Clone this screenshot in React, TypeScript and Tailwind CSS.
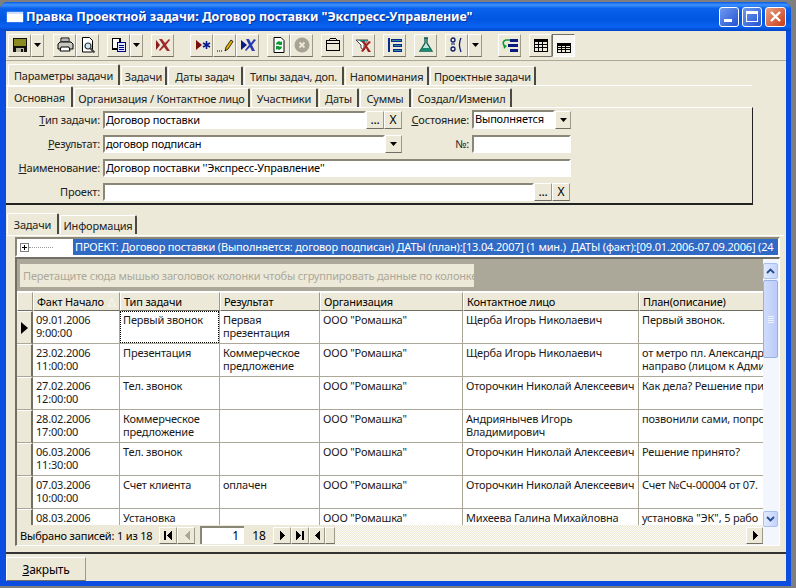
import React from "react";

const raised = "border border-t-white border-l-white border-r-[#9d9a8a] border-b-[#716f64]";
const sunken = "border-2 border-t-[#8a8778] border-l-[#8a8778] border-r-white border-b-white bg-white";

function Btn({ w = 23, children, cls = "" }: { w?: number; children?: React.ReactNode; cls?: string }) {
  return (
    <div style={{ width: w }} className={`h-[23px] shrink-0 flex items-center justify-center bg-[#ece9d8] ${raised} ${cls}`}>
      {children}
    </div>
  );
}
const Caret = () => <svg width="7" height="4" viewBox="0 0 7 4"><path d="M0 0h7L3.5 4z" fill="#000" /></svg>;
const I = ({ children }: { children: React.ReactNode }) => (
  <svg width="18" height="18" viewBox="0 0 18 18" shapeRendering="crispEdges">{children}</svg>
);
const I2 = ({ children }: { children: React.ReactNode }) => (
  <svg width="18" height="18" viewBox="0 0 18 18">{children}</svg>
);

const RedX = ({ c = "#8a1a1a" }: { c?: string }) => (
  <path d="M5 3l3 0 3 4 4-4 1 1-4 5 4 6-3 0-3-4-4 4-1-1 4-5z" fill={c} />
);

function Tab({ w, active, children }: { w: number; active?: boolean; children: React.ReactNode }) {
  return (
    <div
      style={{ width: w }}
      className={`shrink-0 flex items-center justify-center rounded-t-[2px] border-t border-l border-t-white border-l-white border-r-2 border-r-[#4a4942] whitespace-nowrap ${active ? "h-[21px] relative z-10 bg-[#ece9d8] -mt-[2px]" : "h-[19px]"}`}
    >
      {children}
    </div>
  );
}

function Field({ w, h = 18, children, cls = "" }: { w: number; h?: number; children?: React.ReactNode; cls?: string }) {
  return (
    <div style={{ width: w, height: h }} className={`shrink-0 overflow-hidden whitespace-nowrap leading-[14px] pl-px ${sunken} ${cls}`}>
      {children}
    </div>
  );
}
function Mini({ children, w = 18 }: { children: React.ReactNode; w?: number }) {
  return (
    <div style={{ width: w }} className={`h-[18px] shrink-0 flex items-center justify-center text-[12px] leading-none bg-[#ece9d8] ${raised}`}>
      {children}
    </div>
  );
}
const Label = ({ w, children }: { w: number; children: React.ReactNode }) => (
  <div style={{ width: w }} className="shrink-0 text-right pr-[3px] text-[#222] whitespace-nowrap">{children}</div>
);

const cols = [87, 100, 100, 143, 176, 125];
const head = ["Факт Начало", "Тип задачи", "Результат", "Организация", "Контактное лицо", "План(описание)"];
const org = 'ООО "Ромашка"';
const rows: string[][] = [
  ["09.01.2006\n9:00:00", "Первый звонок", "Первая\nпрезентация", org, "Щерба Игорь Николаевич", "Первый звонок."],
  ["23.02.2006\n11:00:00", "Презентация", "Коммерческое\nпредложение", org, "Щерба Игорь Николаевич", "от метро пл. Александр\nнаправо (лицом к Адми"],
  ["27.02.2006\n12:00:00", "Тел. звонок", "", org, "Оторочкин Николай Алексеевич", "Как дела? Решение при"],
  ["28.02.2006\n17:00:00", "Коммерческое\nпредложение", "", org, "Андриянычев Игорь\nВладимирович", "позвонили сами, попро"],
  ["06.03.2006\n11:30:00", "Тел. звонок", "", org, "Оторочкин Николай Алексеевич", "Решение принято?"],
  ["07.03.2006\n10:00:00", "Счет клиента", "оплачен", org, "Оторочкин Николай Алексеевич", "Счет №Сч-00004 от 07."],
  ["08.03.2006", "Установка", "", org, "Михеева Галина Михайловна", 'установка "ЭК", 5 рабо'],
];

const Nav = ({ w = 18, d, fade }: { w?: number; d: string; fade?: boolean }) => (
  <div style={{ width: w }} className={`h-[17px] shrink-0 flex items-center justify-center bg-[#ece9d8] ${raised}`}>
    <svg width="11" height="9" viewBox="0 0 11 9" shapeRendering="crispEdges"><path d={d} fill={fade ? "#aca899" : "#000"} /></svg>
  </div>
);

export default function App() {
  return (
    <div className="w-[796px] h-[588px] bg-[#7f7f7f] overflow-hidden pt-[2px] text-[11px] leading-[13px] tracking-[-0.18px] text-black font-['Roboto',sans-serif]">
      <div className="w-[791px] h-[584px] flex flex-col rounded-t-[8px] bg-[#0a4de0] overflow-hidden">
        {/* title bar */}
        <div className="h-[29px] shrink-0 flex items-center pl-[7px] pr-[5px] bg-[linear-gradient(180deg,#0a5ae8_0%,#3f93fb_10%,#0a62ee_22%,#0056e0_60%,#0a62f0_85%,#0044c8_100%)]">
          <div className="w-[16px] h-[10px] bg-white border-t-2 border-[#cfe0ff] shadow-[0_0_1px_#fff]" />
          <div className="ml-[3px] text-white font-bold text-[12.5px] tracking-[-0.05px] whitespace-nowrap [text-shadow:1px_1px_0_#0a2f90]">
            Правка Проектной задачи: Договор поставки "Экспресс-Управление"
          </div>
          <div className="ml-auto flex gap-[3px]">
            <div className="w-[20px] h-[20px] rounded-[3px] border border-white bg-[linear-gradient(135deg,#6f9bf0,#2352d0)] flex items-end pl-[4px] pb-[4px]">
              <div className="w-[8px] h-[3px] bg-white" />
            </div>
            <div className="w-[20px] h-[20px] rounded-[3px] border border-white bg-[linear-gradient(135deg,#6f9bf0,#2352d0)] flex items-center justify-center">
              <div className="w-[12px] h-[11px] border border-white border-t-[3px]" />
            </div>
            <div className="w-[21px] h-[20px] rounded-[3px] border border-white bg-[linear-gradient(135deg,#e8a088,#c83c14)] flex items-center justify-center">
              <svg width="13" height="13" viewBox="0 0 13 13"><path d="M2 2l9 9M11 2l-9 9" stroke="#fff" strokeWidth="2.4" /></svg>
            </div>
          </div>
        </div>
        {/* client */}
        <div className="flex-1 min-h-0 ml-[6px] mr-[5px] mb-[5px] bg-[#ece9d8] flex flex-col">
          {/* toolbar */}
          <div className="h-[30px] shrink-0 flex items-center pl-[2px] border-b border-b-[#aca899] pb-px">
            <Btn><I><path d="M2 2h14v14H2z" fill="#111" /><path d="M3 3h12v7H3z" fill="#8a8a20" /><path d="M5 12h8v4H5z" fill="#b8b8a0" /><path d="M10 13h2v3h-2z" fill="#111" /></I></Btn>
            <Btn w={13}><Caret /></Btn>
            <Btn cls="ml-[9px]"><I2><path d="M5 2h8v5H5z" fill="#fff" stroke="#000" /><path d="M2 8l2-2h11l2 2v5H2z" fill="#c8c8c0" stroke="#000" /><path d="M5 11h8l1 4H4z" fill="#fff" stroke="#000" /><path d="M6 4h6M6 5.5h6" stroke="#000" strokeWidth=".6" /></I2></Btn>
            <Btn><I2><path d="M3.5 1.5h7l3 3V16h-10z" fill="#fff" stroke="#000" /><circle cx="9" cy="10" r="3" fill="#cfe6f5" stroke="#333" strokeWidth="1.2" /><path d="M11 12l4.5 4.5" stroke="#444" strokeWidth="2" /></I2></Btn>
            <Btn cls="ml-[8px]"><I><path d="M2 2h8v11H2z" fill="#fff" stroke="#000" /><path d="M2.5 2.5h7v10h-7z" fill="none" stroke="#000" /><path d="M7 6h9v10H7z" fill="#dfe6ff" /><path d="M7 6h9v1H7zM7 15h9v1H7zM7 6h1v10H7zM15 6h1v10h-1z" fill="#000080" /><path d="M9 9h5v1H9zM9 11h5v1H9zM9 13h5v1H9z" fill="#000080" /></I></Btn>
            <Btn w={13}><Caret /></Btn>
            <Btn cls="ml-[8px]"><I2><path d="M2 4l4 5-4 5z" fill="#8a1a1a" /><RedX c="#9c2a2a" /></I2></Btn>
            <Btn cls="ml-[16px]"><I2><path d="M3 4l6 5-6 5z" fill="#7a1010" /><path d="M13.5 5v8M10 7l7 4M17 7l-7 4" stroke="#0a1a90" strokeWidth="1.6" /></I2></Btn>
            <Btn><I2><path d="M1 15h1M3 15h1M5 15h1" stroke="#000" /><path d="M9 15l1-4 5-7 2 1.5-5 7.5z" fill="#e6b800" stroke="#000" strokeWidth=".8" /></I2></Btn>
            <Btn><I2><path d="M2 4l6 5-6 5z" fill="#0a1a80" /><path d="M7 3l3 0 2 4 3-4 2 1-4 5 3 6-3 0-2-4-4 4-1-1 4-5z" fill="#2a3ab0" /></I2></Btn>
            <Btn cls="ml-[8px]"><I2><path d="M4 1.5h7l3 3V16.500H4z" fill="#fff" stroke="#000" /><path d="M6 8a3 3 0 0 1 5-2l1-1v4H8l1-1a2 2 0 0 0-2 1z" fill="#0a9a30" /><path d="M12 11a3 3 0 0 1-5 2l-1 1v-4h4l-1 1a2 2 0 0 0 2-1z" fill="#0a9a30" /></I2></Btn>
            <Btn><I2><circle cx="9" cy="9" r="7.500" fill="#a6a294" /><path d="M6.500 6.500l5 5M11.500 6.500l-5 5" stroke="#ece9d8" strokeWidth="1.800" /></I2></Btn>
            <Btn cls="ml-[8px]"><I><path d="M2 5h14v10H2z" fill="#ece9d8" /><path d="M2 4h14v1H2zM2 14h14v1H2zM2 4h1v11H2zM15 4h1v11h-1zM6 2h6v1H6zM5 3h1v2H5zM12 3h1v2h-1zM2 7h14v1H2z" fill="#000" /></I></Btn>
            <Btn cls="ml-[8px]"><I2><path d="M1 4h12l-4 5v5l-3-2V9z" fill="#fff" stroke="#444" /><path d="M4 4h8l-2 2H6z" fill="#0a8a80" /><path d="M6 5l3 0 2 3 3-3 2 1-4 4 4 6-3 0-2-4-3 4-2-1 4-5z" fill="#a02020" /></I2></Btn>
            <Btn cls="ml-[8px]"><I><path d="M2 2h2v14H2z" fill="#0a2a90" /><path d="M5 3h11v3H5zM7 8h9v3H7zM7 13h9v3H7z" fill="#0a2a90" /><path d="M6 4h9v1H6zM8 9h7v1H8zM8 14h7v1H8z" fill="#2a8a9a" /></I></Btn>
            <Btn cls="ml-[8px]"><I2><path d="M7 2h4M8 2v5l-5 8h12l-5-8V2" fill="#bfe5d8" stroke="#0a5a50" strokeWidth="1.300" /><path d="M5 12h8l2 3H3z" fill="#1a8a70" /></I2></Btn>
            <Btn cls="ml-[8px]"><I2><circle cx="5" cy="4" r="2" fill="none" stroke="#0a1a70" strokeWidth="1.300" /><circle cx="5" cy="13" r="2" fill="none" stroke="#0a1a70" strokeWidth="1.300" /><path d="M3 8h4" stroke="#0a1a70" /><path d="M13 2c-2 4-2 9 0 14" fill="none" stroke="#0a1a70" strokeWidth="1.300" /></I2></Btn>
            <Btn w={14}><Caret /></Btn>
            <Btn cls="ml-[16px]"><I2><path d="M9 4H5a3 3 0 0 0-2 5" fill="none" stroke="#0a9a30" strokeWidth="1.600" /><path d="M2 8l4 2-3 3z" fill="#0a9a30" /><path d="M9 3h8v3H9zM7 8h10v3H7zM9 13h8v3H9z" fill="#0a1a80" /></I2></Btn>
            <Btn cls="ml-[8px]"><I><path d="M2 3h14v13H2z" fill="#000" /><path d="M3 6h3v2H3zM7 6h3v2H7zM11 6h4v2h-4zM3 9h3v2H3zM7 9h3v2H7zM11 9h4v2h-4zM3 12h3v3H3zM7 12h3v3H7zM11 12h4v3h-4z" fill="#ece9d8" /></I></Btn>
            <div className="w-[23px] h-[23px] shrink-0 flex items-center justify-center border border-t-[#716f64] border-l-[#716f64] border-r-white border-b-white bg-[#f7f6f0]">
              <div className="mt-[3px]"><I><path d="M2 5h14v10H2z" fill="#000" /><path d="M3 8h3v1H3zM7 8h3v1H7zM11 8h4v1h-4zM3 10h3v1H3zM7 10h3v1H7zM11 10h4v1h-4zM3 12h3v2H3zM7 12h3v2H7zM11 12h4v2h-4z" fill="#ece9d8" /></I></div>
            </div>
          </div>

          {/* upper tabs */}
          <div className="flex pl-[2px] mt-[5px] h-[19px] text-[#222] gap-[1px]">
            <Tab w={112} active>Параметры задачи</Tab>
            <Tab w={46}>Задачи</Tab>
            <Tab w={75}>Даты задач</Tab>
            <Tab w={100}>Типы задач, доп.</Tab>
            <Tab w={84}>Напоминания</Tab>
            <Tab w={106}>Проектные задачи</Tab>
          </div>
          <div className="w-[746px] border-t border-t-white h-[3px]" />
          <div className="flex pl-[1px] h-[19px] text-[#222] gap-[1px]">
            <Tab w={66} active>Основная</Tab>
            <Tab w={176}>Организация / Контактное лицо</Tab>
            <Tab w={67}>Участники</Tab>
            <Tab w={40}>Даты</Tab>
            <Tab w={51}>Суммы</Tab>
            <Tab w={100}>Создал/Изменил</Tab>
          </div>
          {/* form panel */}
          <div className="w-[747px] h-[98px] shrink-0 border-t border-t-white border-r border-r-[#222] border-b-2 border-b-[#222] flex flex-col gap-[6px] pt-[2px] leading-[14px]">
            <div className="flex items-center">
              <Label w={97}><u>Т</u>ип задачи:</Label>
              <Field w={263}>Договор поставки</Field>
              <Mini>...</Mini><Mini>X</Mini>
              <div className="w-[70px] shrink-0 text-right pr-[3px] text-[#222] whitespace-nowrap"><u>С</u>остояние:</div>
              <Field w={83} h={19}>Выполняется</Field>
              <Mini w={16}><Caret /></Mini>
            </div>
            <div className="flex items-center">
              <Label w={97}><u>Р</u>езультат:</Label>
              <Field w={282}>договор подписан</Field>
              <Mini w={17}><Caret /></Mini>
              <Label w={70}>№:</Label>
              <Field w={99} />
            </div>
            <div className="flex items-center">
              <Label w={97}><u>Н</u>аименование:</Label>
              <Field w={468}>Договор поставки ''Экспресс-Управление''</Field>
            </div>
            <div className="flex items-center">
              <Label w={97}>Проект:</Label>
              <Field w={431} />
              <Mini>...</Mini><Mini>X</Mini>
            </div>
          </div>

          {/* lower tabs */}
          <div className="flex pl-[1px] mt-[10px] h-[19px] text-[#222] gap-[1px]">
            <Tab w={52} active>Задачи</Tab>
            <Tab w={77}>Информация</Tab>
          </div>
          {/* lower panel */}
          <div className="border-t border-t-white mt-[1px] h-[2px] w-[778px]" />
          <div className="ml-[9px] w-[765px] flex flex-col">
            {/* tree row */}
            <div className="h-[20px] shrink-0 flex items-center border-2 border-t-[#8a8778] border-l-[#8a8778] border-r-white border-b-white bg-white overflow-hidden">
              <div className="w-[56px] shrink-0 flex items-center pl-[3px]">
                <div className="w-[9px] h-[9px] border border-[#808080] relative flex items-center justify-center text-[9px] leading-none">
                  <svg width="7" height="7" viewBox="0 0 7 7" shapeRendering="crispEdges"><path d="M1 3h5v1H1zM3 1h1v5H3z" fill="#000" /></svg>
                </div>
                <div className="w-[24px] border-t border-dotted border-[#999]" />
              </div>
              <div className="flex-1 h-full bg-[#316ac5] text-white whitespace-nowrap overflow-hidden pl-[2px] leading-[16px]">
                ПРОЕКТ: Договор поставки (Выполняется: договор подписан) ДАТЫ (план):[13.04.2007] (1 мин.)&nbsp; ДАТЫ (факт):[09.01.2006-07.09.2006] (24
              </div>
            </div>
            {/* grid */}
            <div className="h-[289px] flex border-t-2 border-l-2 border-t-[#716f64] border-l-[#716f64] border-r border-b border-white">
              <div className="flex-1 min-w-0 flex flex-col">
                <div className="h-[32px] shrink-0 bg-[#aca899] pl-[3px] pt-[5px]">
                  <div className="w-[454px] h-[23px] bg-[#ece9d8] text-[#aca899] flex items-center pl-[3px] whitespace-nowrap">
                    Перетащите сюда мышью заголовок колонки чтобы сгруппировать данные по колонке
                  </div>
                </div>
                <div className="flex h-[20px] shrink-0 border-t border-t-white">
                  <div className={`w-[16px] shrink-0 ${raised}`} />
                  {head.map((h, i) => (
                    <div key={h} style={{ width: cols[i] }} className={`shrink-0 flex items-center pl-[3px] whitespace-nowrap overflow-hidden ${raised} border-b-[#716f64]`}>
                      {h}{i === 0 && <span className="ml-[4px] text-white text-[10px]">△</span>}
                    </div>
                  ))}
                </div>
                <div className="flex-1 min-h-0 overflow-hidden">
                  {rows.map((r, ri) => (
                    <div key={ri} className="flex h-[33px]">
                      <div className={`w-[16px] shrink-0 flex items-center justify-center border-r-2 border-r-[#716f64] border-b border-b-[#aca899] bg-[#ece9d8] border-t border-t-white`}>
                        {ri === 0 && <svg width="7" height="12" viewBox="0 0 7 12"><path d="M0 0l7 6-7 6z" fill="#000" /></svg>}
                      </div>
                      {r.map((c, ci) => (
                        <div key={ci} style={{ width: cols[ci] }} className={`relative shrink-0 overflow-hidden bg-white pl-[3px] pt-[2px] border-r border-b border-[#aca899] text-[#1a1a1a] whitespace-pre`}>
                          {ri === 0 && ci === 1 && <div className="absolute inset-[0px] border border-dotted border-black" />}
                          {c}
                        </div>
                      ))}
                    </div>
                  ))}
                </div>
                <div className="h-[20px] shrink-0 flex items-center bg-[repeating-conic-gradient(#ece9d8_0_25%,#fbfaf4_0_50%)] bg-[length:2px_2px]">
                  <div className="h-full flex items-center bg-[#ece9d8] pl-[3px]">
                    <div className="w-[139px] whitespace-nowrap">Выбрано записей: 1 из 18</div>
                    <Nav d="M1 0h2v9H1zM9 0v9L4 4.500z" />
                    <Nav d="M9 0v9L4 4.500z" fade />
                    <div className={`w-[44px] h-[18px] ml-[5px] text-right pr-[5px] text-[12px] leading-[15px] border-l-2 border-t-2 border-l-[#8a8778] border-t-[#8a8778] bg-white`}>1</div>
                    <div className="w-[28px] text-center text-[12px] ml-[1px]">18</div>
                    <Nav d="M3 0v9l5-4.500z" />
                    <Nav d="M1 0v9l5-4.500zM7 0h2v9H7z" />
                    <Nav w={16} d="M8 0v9L3 4.500z" />
                    <div className={`w-[10px] h-[17px] ${raised}`} />
                  </div>
                  <div className="flex-1" />
                  <Nav w={17} d="M4 0v9l5-4.500z" />
                </div>
              </div>
              {/* scrollbar */}
              <div className="w-[16px] shrink-0 bg-[#f3f6fd] flex flex-col pr-px">
                <div className="h-[16px] mt-[4px] rounded-[2px] bg-[linear-gradient(90deg,#e1eafe,#c3d3fd)] border border-[#a9bfef] flex items-center justify-center">
                  <svg width="9" height="6" viewBox="0 0 9 6"><path d="M1 5l3.500-3.500L8 5" fill="none" stroke="#2a4a8a" strokeWidth="1.800" /></svg>
                </div>
                <div className="h-[78px] mt-[1px] rounded-[2px] bg-[linear-gradient(90deg,#d0dcfc,#bccbf8)] border border-[#98b1e4] flex flex-col items-center justify-center gap-[1px]">
                  <div className="w-[6px] h-px bg-[#eef4fe]" /><div className="w-[6px] h-px bg-[#eef4fe]" /><div className="w-[6px] h-px bg-[#eef4fe]" /><div className="w-[6px] h-px bg-[#eef4fe]" />
                </div>
                <div className="flex-1" />
                <div className="h-[16px] mb-[18px] rounded-[2px] bg-[linear-gradient(90deg,#e1eafe,#c3d3fd)] border border-[#a9bfef] flex items-center justify-center">
                  <svg width="9" height="6" viewBox="0 0 9 6"><path d="M1 1l3.500 3.500L8 1" fill="none" stroke="#2a4a8a" strokeWidth="1.800" /></svg>
                </div>
              </div>
            </div>
          </div>
          <div className="flex-1" />
          {/* bottom */}
          <div className="h-[29px] shrink-0 border-t-2 border-t-[#333] pt-[3px]">
            <div className={`w-[80px] h-[24px] flex items-center justify-center text-[12px] ${raised}`}>
              <span><u>З</u>акрыть</span>
            </div>
          </div>
        </div>
      </div>
    </div>
  );
}
